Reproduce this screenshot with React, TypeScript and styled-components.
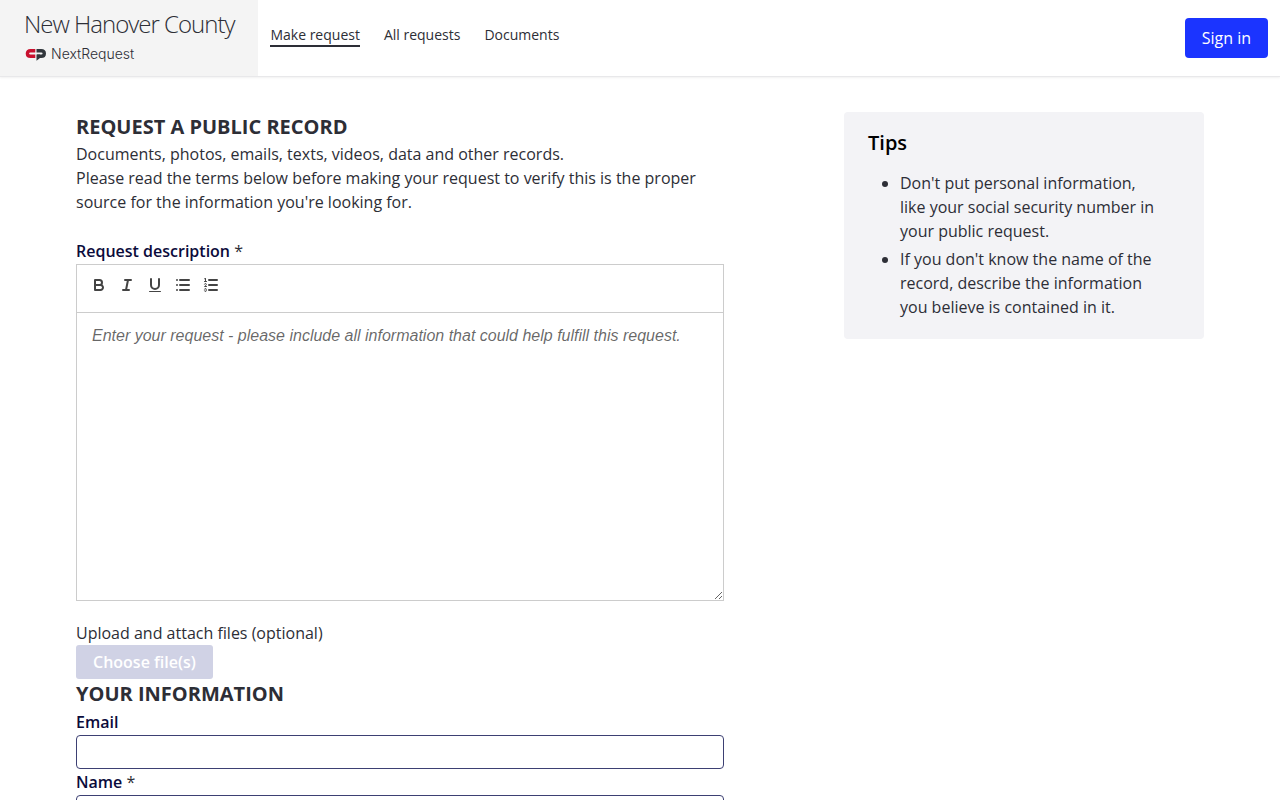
import React from "react";
import styled, { createGlobalStyle } from "styled-components";

const GlobalStyle = createGlobalStyle`
  *, *::before, *::after { box-sizing: border-box; }
  body {
    margin: 0;
    background: #fff;
    color: #2d2e36;
    font: 400 16px/24px "Open Sans", sans-serif;
  }
  h1, h2, p, ul { margin: 0; }
`;

const Header = styled.header`
  display: flex;
  align-items: stretch;
  height: 77px;
  border-bottom: 1px solid #e8e8ea;
  box-shadow: 0 1px 2px rgba(0, 0, 0, 0.06);
`;

const Brand = styled.a`
  display: flex;
  flex-direction: column;
  gap: 4px;
  padding: 8px 24px 0;
  background: #f4f4f4;
  color: #2d2e36;
  text-decoration: none;
`;

const County = styled.span`
  font-size: 24px;
  line-height: 32px;
  font-weight: 300;
  letter-spacing: -1px;
`;

const Product = styled.span`
  display: flex;
  align-items: center;
  gap: 5px;
  font: 300 14px/20px Inter, sans-serif;
`;

const Nav = styled.nav`
  display: flex;
  flex: 1;
  align-items: flex-start;
  gap: 24px;
  padding: 25px 12px 0;
`;

const NavLink = styled.a<{ $active?: boolean }>`
  border-bottom: 2px solid ${(p) => (p.$active ? "#2d2e36" : "transparent")};
  color: #2d2e36;
  font-size: 14px;
  line-height: 20px;
  text-decoration: none;
`;

const SignIn = styled.button`
  height: 40px;
  margin: 18px 12px 0 0;
  padding: 0 17px;
  border: 0;
  border-radius: 4px;
  background: #1b34ff;
  color: #fff;
  font: inherit;
`;

const Page = styled.main`
  display: grid;
  grid-template-columns: repeat(12, minmax(0, 1fr));
  column-gap: 24px;
  align-items: start;
  max-width: 1152px;
  margin: 0 auto;
  padding: 35px 12px 24px;
`;

const RequestForm = styled.form`
  grid-column: 1 / span 7;
`;

const Title = styled.h1`
  font-size: 20px;
  line-height: 30px;
  font-weight: 700;
  text-transform: uppercase;
`;

const SectionTitle = styled(Title).attrs({ as: "h2" })``;

const Intro = styled.p`
  margin-bottom: 24px;
`;

const Label = styled.label`
  display: block;
  color: #0b0b3b;
  font-weight: 600;
  line-height: 26px;
`;

const Required = styled.span`
  color: #2d2e36;
  font-weight: 400;
`;

const Editor = styled.div`
  display: flex;
  flex-direction: column;
  margin-bottom: 20px;
  border: 1px solid #ccc;
`;

const Toolbar = styled.div`
  display: flex;
  height: 48px;
  padding: 8px;
  border-bottom: 1px solid #ccc;
`;

const Tool = styled.button`
  width: 28px;
  height: 24px;
  padding: 3px 5px;
  border: 0;
  background: none;

  svg {
    display: block;
    width: 18px;
    height: 18px;
    fill: none;
    stroke: #444;
    stroke-width: 2;
    stroke-linecap: round;
    stroke-linejoin: round;
  }
  .fill { fill: #444; stroke: none; }
  .thin { stroke-width: 1; }
`;

const Description = styled.textarea`
  display: block;
  width: 100%;
  height: 287px;
  padding: 12px 15px;
  border: 0;
  outline: 0;
  resize: vertical;
  background: #fff;
  color: #2d2e36;
  font: 16px/22px "Liberation Sans", Arial, sans-serif;

  &::placeholder {
    color: rgba(0, 0, 0, 0.6);
    font-style: italic;
    opacity: 1;
  }
`;

const ChooseFiles = styled.button`
  display: block;
  height: 34px;
  padding: 0 17px;
  border: 0;
  border-radius: 3px;
  background: #d0d2e5;
  color: #fff;
  font: inherit;
  font-weight: 600;
`;

const TextInput = styled.input`
  display: block;
  width: 100%;
  height: 34px;
  padding: 4px 8px;
  border: 1px solid #3d4073;
  border-radius: 4px;
  background: #fff;
  font: inherit;
`;

const Tips = styled.aside`
  grid-column: 9 / span 4;
  padding: 16px 24px;
  border-radius: 4px;
  background: #f3f3f6;
`;

const TipsTitle = styled.h2`
  margin-bottom: 13px;
  color: #000;
  font-size: 20px;
  line-height: 30px;
  font-weight: 600;
`;

const TipList = styled.ul`
  padding: 0 24px 0 32px;
`;

const Tip = styled.li`
  margin-bottom: 4px;
`;

const ProductLogo = () => (
  <svg width="22" height="14" viewBox="0 0 22 14" fill="none" strokeWidth="3.4" aria-hidden="true">
    <path stroke="#c8102e" d="M11.300 3.700H6.500C4.400 3.700 3.400 5 3.400 6.500S4.400 9.300 6.500 9.300H11.300" />
    <path stroke="#32373c" d="M12.500 3.700H17.200C19.300 3.700 20.300 5 20.300 6.500S19.300 9.300 17.200 9.300H13" />
    <path fill="#32373c" d="M12.500 7.600H16V11L12.500 13.700Z" />
  </svg>
);

const tools = [
  {
    name: "Bold",
    icon: (
      <>
        <path d="M5,4H9.500A2.500,2.500,0,0,1,12,6.500v0A2.500,2.500,0,0,1,9.500,9H5Z" />
        <path d="M5,9h5.500A2.500,2.500,0,0,1,13,11.500v0A2.500,2.500,0,0,1,10.500,14H5Z" />
      </>
    ),
  },
  { name: "Italic", icon: <path d="M7,4H13M5,14H11M8,14L10,4" /> },
  {
    name: "Underline",
    icon: (
      <>
        <path d="M5,3V9a4,4,0,0,0,8,0V3" />
        <rect className="fill" height="1" rx="0.5" width="12" x="3" y="15" />
      </>
    ),
  },
  {
    name: "Bulleted list",
    icon: <path d="M6,4H15M6,9H15M6,14H15M3,4H3M3,9H3M3,14H3" />,
  },
  {
    name: "Numbered list",
    icon: (
      <>
        <path d="M7,4H15M7,9H15M7,14H15" />
        <path className="thin" d="M2.500,5.500H4.500" />
        <path
          className="fill"
          d="M3.500,6A0.500,0.500,0,0,1,3,5.500V3.085l-0.276.138A0.500,0.500,0,0,1,2.053,3c-0.124-.247-0.023-0.324.224-0.447l1-.5A0.500,0.500,0,0,1,4,2.500v3A0.500,0.500,0,0,1,3.500,6Z"
        />
        <path className="thin" d="M4.500,10.500h-2c0-.234,1.850-1.076,1.850-2.234A0.959,0.959,0,0,0,2.500,8.156" />
        <path
          className="thin"
          d="M2.500,14.846a0.959,0.959,0,0,0,1.850-.109A0.700,0.700,0,0,0,3.750,14a0.688,0.688,0,0,0,.6-0.736,0.959,0.959,0,0,0-1.850-.109"
        />
      </>
    ),
  },
];

export default function App() {
  return (
    <>
      <GlobalStyle />
      <Header>
        <Brand href="#">
          <County>New Hanover County</County>
          <Product>
            <ProductLogo />
            NextRequest
          </Product>
        </Brand>
        <Nav>
          <NavLink href="#new" $active>Make request</NavLink>
          <NavLink href="#requests">All requests</NavLink>
          <NavLink href="#documents">Documents</NavLink>
        </Nav>
        <SignIn type="button">Sign in</SignIn>
      </Header>
      <Page>
        <RequestForm>
          <Title>Request a public record</Title>
          <Intro>
            Documents, photos, emails, texts, videos, data and other records.
            <br />
            Please read the terms below before making your request to verify this is the proper source for the
            information you're looking for.
          </Intro>
          <Label htmlFor="description">
            Request description <Required>*</Required>
          </Label>
          <Editor>
            <Toolbar role="toolbar" aria-label="Formatting">
              {tools.map((tool) => (
                <Tool key={tool.name} type="button" aria-label={tool.name}>
                  <svg viewBox="0 0 18 18">{tool.icon}</svg>
                </Tool>
              ))}
            </Toolbar>
            <Description
              id="description"
              placeholder="Enter your request - please include all information that could help fulfill this request."
            />
          </Editor>
          <p>Upload and attach files (optional)</p>
          <ChooseFiles type="button" disabled>Choose file(s)</ChooseFiles>
          <SectionTitle>Your information</SectionTitle>
          <Label htmlFor="email">Email</Label>
          <TextInput id="email" type="email" />
          <Label htmlFor="name">
            Name <Required>*</Required>
          </Label>
          <TextInput id="name" type="text" />
        </RequestForm>
        <Tips>
          <TipsTitle>Tips</TipsTitle>
          <TipList>
            <Tip>Don't put personal information, like your social security number in your public request.</Tip>
            <Tip>If you don't know the name of the record, describe the information you believe is contained in it.</Tip>
          </TipList>
        </Tips>
      </Page>
    </>
  );
}
